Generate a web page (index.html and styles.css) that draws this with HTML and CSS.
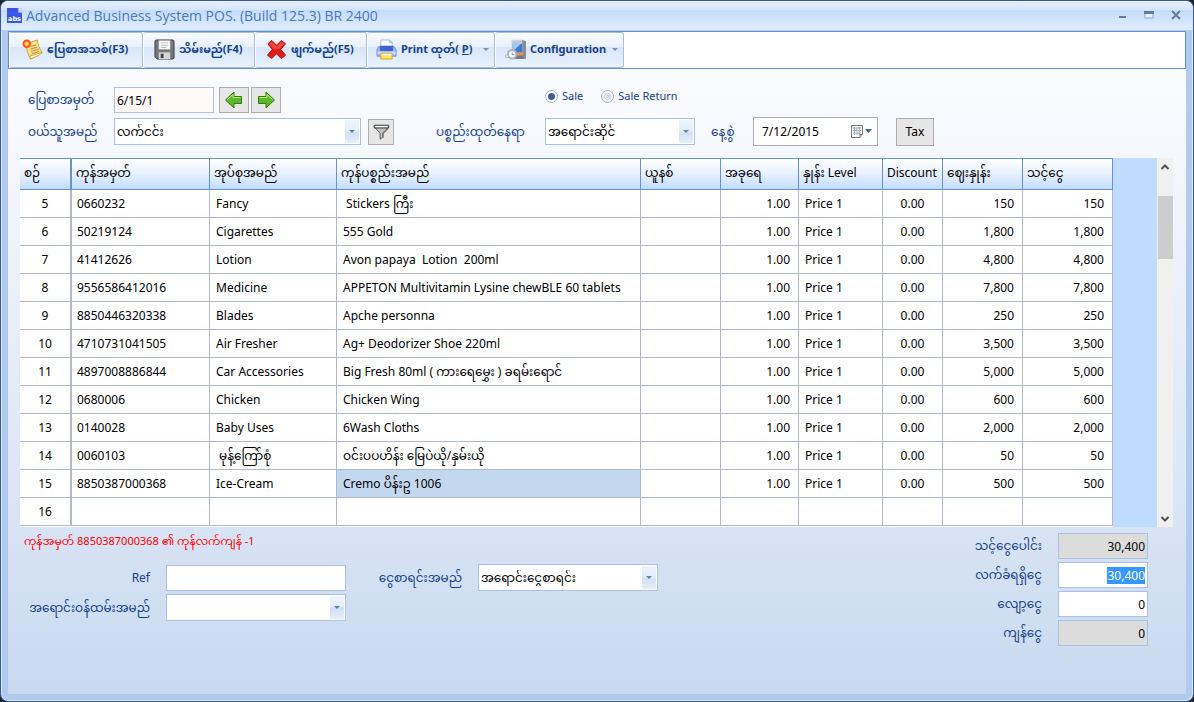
FILE: index.html
```html
<!DOCTYPE html>
<html lang="my">
<head>
<meta charset="utf-8">
<meta name="viewport" content="width=device-width, initial-scale=1">
<title>Advanced Business System POS</title>
<link rel="stylesheet" href="styles.css">
</head>
<body>
<div class="window">
  <header class="titlebar">
    <svg class="app-icon" viewBox="0 0 16 16" aria-hidden="true"><defs><linearGradient id="app" x1="0" y1="0" x2="0" y2="1"><stop offset="0" stop-color="#3a4ee0"/><stop offset="1" stop-color="#4468f0"/></linearGradient></defs><rect width="16" height="16" fill="url(#app)"/><path d="M12 0h4v5H12z" fill="#c8d4f8"/><path d="M0 7h16v9H0z" fill="#3556e6"/><text x="8" y="14" text-anchor="middle" class="app-icon-text">abs</text></svg>
    <h1>Advanced Business System POS. (Build 125.3) BR 2400</h1>
    <div class="win-controls">
      <button type="button" aria-label="Minimize"><svg viewBox="0 0 10 10"><rect x="2" y="6" width="7" height="2" fill="#66799a"/></svg></button>
      <button type="button" aria-label="Maximize"><svg viewBox="0 0 10 10"><path d="M1 2h8v6H1z" fill="#e4effc" stroke="#8fa9d0"/><path d="M0 1h10v3H0z" fill="#66799a"/></svg></button>
      <button type="button" aria-label="Close"><svg viewBox="0 0 10 10"><path d="M1 1l8 8M9 1L1 9" stroke="#66799a" stroke-width="2"/></svg></button>
    </div>
  </header>

  <main class="client">
    <nav class="toolbar">
      <button type="button" class="tool w-new">
        <svg viewBox="0 0 22 22"><path d="M4 5l12-4c1 5 2 9 5 13-4 2-7 4-12 7-3-5-4-10-5-16z" fill="#f9df8e" stroke="#c9a23a"/><path d="M9 21l-1-3 13-4-3 3z" fill="#fff4c4" stroke="#c9a23a"/><path d="M9 8l6-2M9 10.500l7-2M9.500 13l8-2.500M10 15.500l8-2.500" stroke="#b08b2c"/><circle cx="5" cy="5" r="3.500" fill="#ffb24a" stroke="#f25a1c" stroke-width="2"/><circle cx="5" cy="5" r="1.500" fill="#ffe36a"/></svg>
        <span>ပြေစာအသစ်(F3)</span></button>
      <button type="button" class="tool w-save">
        <svg viewBox="0 0 22 22"><path d="M2 1h18l1 1v18l-1 1H3l-2-2V2z" fill="#77777a" stroke="#3f3f42"/><path d="M5 1.500h12V11H5z" fill="#fff" stroke="#999" stroke-width=".6"/><path d="M7 4h8M7 6.500h8M7 9h6" stroke="#bbb"/><path d="M5 14h12v7H5z" fill="#d6d6d8"/><path d="M7 15.500h3V20H7z" fill="#444"/></svg>
        <span>သိမ်းမည်(F4)</span></button>
      <button type="button" class="tool w-del">
        <svg viewBox="0 0 22 22"><path d="M2 5l4-3.500 5 5 5-5L20.500 5l-5 6 5 6-4.500 3.500-5-5-5 5L1.500 17l5-6z" fill="#e01b18" stroke="#b8120f"/><path d="M3.500 5L6 3l5 5 5-5 3 2-5 5.500H8z" fill="#ee4a42"/></svg>
        <span>ဖျက်မည်(F5)</span></button>
      <button type="button" class="tool w-print">
        <svg viewBox="0 0 22 22"><path d="M5 1h9l3 3v6H5z" fill="#fff" stroke="#9dbdf0"/><path d="M14 1v3h3z" fill="#cfe0fa" stroke="#9dbdf0"/><path d="M3 8h16l2 3v7H1v-7z" fill="#9db9f2" stroke="#7391dc"/><path d="M4 7h14v5l-2 1H6l-2-1z" fill="#3f66cc"/><path d="M1.500 13h19v3h-19z" fill="#c9dafa"/><path d="M5 15h12v6H5z" fill="#ffe24d" stroke="#c9a73a"/><path d="M6 15.500h10v1.500H6z" fill="#fff"/></svg>
        <span>Print ထုတ်( <u>P</u>)</span><i class="drop"></i></button>
      <button type="button" class="tool w-conf">
        <svg viewBox="0 0 22 22"><path d="M7 1h11l1 1v16H7z" fill="#c3cad6" stroke="#dfe4ec"/><path d="M8 5h10v10H8z" fill="#3e78d6"/><path d="M8 4h10L8 13z" fill="#a6c6f2"/><path d="M18 1l4 1v19l-4-2z" fill="#858c9a"/><path d="M10 14h9v3h-8z" fill="#f0953a"/><path d="M10 17h8l3 4H10z" fill="#70788a"/><circle cx="7.500" cy="16" r="4.500" fill="#dfe3ea" stroke="#a9b0bd" stroke-width="2"/><circle cx="7.500" cy="16" r="3" fill="#fff"/><path d="M7.500 14v2.500H10" fill="none" stroke="#7b8394"/><circle cx="2" cy="18" r="1.500" fill="#eef0f4" stroke="#a9b0bd"/></svg>
        <span>Configuration</span><i class="drop"></i></button>
    </nav>

    <form class="sale-form">
      <label for="slip">ပြေစာအမှတ်</label>
      <div class="slip-cell">
        <input id="slip" class="slip" type="text" value="6/15/1">
        <button type="button" class="box-btn arrow" aria-label="Previous"><svg viewBox="0 0 20 20"><path d="M1.500 10L10 2v4.500h7.500v7H10V18z" fill="#5cb82a" stroke="#2b7d10"/><path d="M3.500 9.500L9 4.500v3h7.500" fill="none" stroke="#b6ec7c"/></svg></button>
        <button type="button" class="box-btn arrow" aria-label="Next"><svg viewBox="0 0 20 20"><path d="M18.500 10L10 2v4.500H2.500v7H10V18z" fill="#5cb82a" stroke="#2b7d10"/><path d="M3.500 7.500H11v-3l5.500 5" fill="none" stroke="#b6ec7c"/></svg></button>
      </div>
      <div class="radios">
        <label><input type="radio" name="kind" checked>Sale</label>
        <label><input type="radio" name="kind">Sale Return</label>
      </div>

      <label for="buyer">ဝယ်သူအမည်</label>
      <span class="combo"><select id="buyer"><option>လက်ငင်း</option></select></span>
      <button type="button" class="box-btn filter" aria-label="Filter"><svg viewBox="0 0 20 20"><path d="M3 5l6 6v7l3-2v-5l6-6z" fill="#c4c4c4" stroke="#555"/><path d="M12 11l6-6v2l-5 5v4l-1 .5z" fill="#777"/><path d="M2.500 2.500h16v3h-16z" fill="#f4f4f4" stroke="#222"/></svg></button>
      <label for="place">ပစ္စည်းထုတ်နေရာ</label>
      <span class="combo"><select id="place"><option>အရောင်းဆိုင်</option></select></span>
      <label for="date" class="date-label">နေ့စွဲ</label>
      <div class="date"><input id="date" type="text" value="7/12/2015"><button type="button" aria-label="Open calendar"><svg viewBox="0 0 22 13"><path d="M.5.500h11v9l-2.500 3H.5z" fill="#fff" stroke="#777"/><path d="M2 3h8M2 5.500h8M2 8h8M3.500 2v8M6 2v8M8.500 2v8" stroke="#a9b2c4"/><path d="M9 12.500v-3h2.500" fill="#ccc" stroke="#777"/><path d="M14 4h7l-3.500 4z" fill="#44658f"/></svg></button></div>
      <button type="button" class="box-btn tax">Tax</button>
    </form>

    <section class="grid-area">
      <div class="table-wrap">
      <table>
        <colgroup><col class="c-no"><col class="c-code"><col class="c-group"><col><col class="c-unit"><col class="c-qty"><col class="c-level"><col class="c-disc"><col class="c-price"><col class="c-amt"></colgroup>
        <thead><tr><th>စဉ်</th><th>ကုန်အမှတ်</th><th>အုပ်စုအမည်</th><th>ကုန်ပစ္စည်းအမည်</th><th>ယူနစ်</th><th>အခုရေ</th><th>နှုန်း Level</th><th>Discount</th><th>ဈေးနှုန်း</th><th>သင့်ငွေ</th></tr></thead>
        <tbody>
          <tr><td>5</td><td>0660232</td><td>Fancy</td><td> Stickers ကြီး</td><td></td><td>1.00</td><td>Price 1</td><td>0.00</td><td>150</td><td>150</td></tr>
          <tr><td>6</td><td>50219124</td><td>Cigarettes</td><td>555 Gold</td><td></td><td>1.00</td><td>Price 1</td><td>0.00</td><td>1,800</td><td>1,800</td></tr>
          <tr><td>7</td><td>41412626</td><td>Lotion</td><td>Avon papaya  Lotion  200ml</td><td></td><td>1.00</td><td>Price 1</td><td>0.00</td><td>4,800</td><td>4,800</td></tr>
          <tr><td>8</td><td>9556586412016</td><td>Medicine</td><td>APPETON Multivitamin Lysine chewBLE 60 tablets</td><td></td><td>1.00</td><td>Price 1</td><td>0.00</td><td>7,800</td><td>7,800</td></tr>
          <tr><td>9</td><td>8850446320338</td><td>Blades</td><td>Apche personna</td><td></td><td>1.00</td><td>Price 1</td><td>0.00</td><td>250</td><td>250</td></tr>
          <tr><td>10</td><td>4710731041505</td><td>Air Fresher</td><td>Ag+ Deodorizer Shoe 220ml</td><td></td><td>1.00</td><td>Price 1</td><td>0.00</td><td>3,500</td><td>3,500</td></tr>
          <tr><td>11</td><td>4897008886844</td><td>Car Accessories</td><td>Big Fresh 80ml ( ကားရေမွှေး ) ခရမ်းရောင်</td><td></td><td>1.00</td><td>Price 1</td><td>0.00</td><td>5,000</td><td>5,000</td></tr>
          <tr><td>12</td><td>0680006</td><td>Chicken</td><td>Chicken Wing</td><td></td><td>1.00</td><td>Price 1</td><td>0.00</td><td>600</td><td>600</td></tr>
          <tr><td>13</td><td>0140028</td><td>Baby Uses</td><td>6Wash Cloths</td><td></td><td>1.00</td><td>Price 1</td><td>0.00</td><td>2,000</td><td>2,000</td></tr>
          <tr><td>14</td><td>0060103</td><td> မုန့်ကြော်စုံ</td><td>ဝင်းပပဟိန်း မြေပဲယို/နှမ်းယို</td><td></td><td>1.00</td><td>Price 1</td><td>0.00</td><td>50</td><td>50</td></tr>
          <tr><td>15</td><td>8850387000368</td><td>Ice-Cream</td><td class="selected">Cremo ပိန်းဥ 1006</td><td></td><td>1.00</td><td>Price 1</td><td>0.00</td><td>500</td><td>500</td></tr>
          <tr><td>16</td><td></td><td></td><td></td><td></td><td></td><td></td><td></td><td></td><td></td></tr>
        </tbody>
      </table>
      </div>
      <div class="scrollbar">
        <button type="button" aria-label="Scroll up"><svg viewBox="0 0 10 10"><path d="M1.500 7L5 3.500 8.500 7" fill="none" stroke="#505050" stroke-width="2"/></svg></button>
        <div class="track"><div class="thumb"></div></div>
        <button type="button" aria-label="Scroll down"><svg viewBox="0 0 10 10"><path d="M1.500 3L5 6.500 8.500 3" fill="none" stroke="#505050" stroke-width="2"/></svg></button>
      </div>
    </section>

    <form class="bottom">
      <div class="details">
        <p class="stock-note">ကုန်အမှတ် 8850387000368 ၏ ကုန်လက်ကျန် -1</p>
        <div class="detail-grid">
          <label for="ref">Ref</label><input id="ref" type="text">
          <label for="account">ငွေစာရင်းအမည်</label>
          <span class="combo"><select id="account"><option>အရောင်းငွေစာရင်း</option></select></span>
          <label for="staff">အရောင်းဝန်ထမ်းအမည်</label>
          <span class="combo"><select id="staff"><option></option></select></span>
        </div>
      </div>
      <div class="totals">
        <label for="total">သင့်ငွေပေါင်း</label><input id="total" type="text" value="30,400" readonly>
        <label for="received">လက်ခံရရှိငွေ</label><input id="received" type="text" value="30,400">
        <label for="less">လျော့ငွေ</label><input id="less" type="text" value="0">
        <label for="balance">ကျန်ငွေ</label><input id="balance" type="text" value="0" readonly>
      </div>
    </form>
  </main>
</div>
<script src="app.js"></script>
</body>
</html>
```
FILE: styles.css
```css
* { box-sizing: border-box; }

:root {
  --navy: #15428b;
  --line: #b0b8cc;
  --field: #a9c1e4;
  --ui: "Noto Sans", "Noto Sans Myanmar", "Padauk", sans-serif;
}

body {
  margin: 0;
  background: #20242c;
  color: #000;
  font-family: var(--ui);
  font-size: 12px;
  line-height: 16px;
}

button, input, select { font: inherit; color: inherit; margin: 0; }
button { cursor: pointer; }

.window {
  display: flex;
  flex-direction: column;
  min-height: 100vh;
  border: 1px solid #3b5a8c;
  border-radius: 8px;
  background: #b1caf0;
  box-shadow: inset 1px 1px 0 #d9e8fc, inset -1px -1px 0 #d9e8fc;
}

/* Title bar */
.titlebar {
  display: flex;
  align-items: center;
  height: 30px;
  padding: 0 8px 0 6px;
  border-radius: 7px 7px 0 0;
  border-bottom: 1px solid #b0cff7;
  background: linear-gradient(#e6effc 0, #d5e5fb 9px, #c4dbf9 9px, #e0edfd 100%);
}
.app-icon { width: 15px; height: 15px; }
.app-icon-text { font: bold 7px "DejaVu Sans"; fill: #fff; }
.titlebar h1 {
  flex: 1;
  margin: 0 0 0 4px;
  color: #4a78bf;
  font: 14px/20px "Open Sans", "Noto Sans", sans-serif;
}
.win-controls { display: flex; gap: 9px; padding-bottom: 2px; }
.win-controls button { width: 18px; height: 18px; padding: 0; border: 0; background: none; }
.win-controls svg { display: block; width: 10px; height: 10px; margin: auto; }

/* Client area */
.client {
  flex: 1;
  display: flex;
  flex-direction: column;
  margin: 0 7px 7px;
  background: linear-gradient(#fcfdff 0, #f4f7fc 20%, #dbe5f5 70%, #c8d9ef 100%);
}

.toolbar {
  display: flex;
  height: 38px;
  border: 1px solid #6390d0;
  background: #fff;
}
.tool {
  display: flex;
  align-items: center;
  gap: 4px;
  padding: 0 0 2px 12px;
  border: 1px solid #a9c0d8;
  border-left-color: #fff;
  border-radius: 3px;
  background: linear-gradient(#fafcff 0, #e8f0fb 40%, #d8e6f8 42%, #e9f2fd 100%);
  color: var(--navy);
  font-size: 11px;
  font-weight: bold;
  white-space: nowrap;
}
.tool svg { flex: none; width: 21px; height: 21px; }
.w-new { width: 134px; }
.w-save, .w-del { width: 112px; padding-left: 10px; }
.w-print { width: 128px; padding-left: 8px; }
.w-conf { width: 129px; padding-left: 9px; }
.drop {
  margin: 0 5px 0 auto;
  border: 3px solid transparent;
  border-top-color: #6d97b8;
  border-bottom: 0;
}

/* Sale form */
.sale-form {
  display: grid;
  grid-template-columns: 86px 247px 75px 109px 150px 58px 125px auto;
  grid-template-rows: 26px 27px;
  row-gap: 5px;
  align-items: center;
  justify-content: start;
  padding: 18px 20px 13px;
}
label { color: var(--navy); white-space: nowrap; }
input[type="text"], select {
  width: 100%;
  height: 26px;
  padding: 0 2px;
  border: 1px solid var(--field);
  border-radius: 0;
  outline: 0;
  background: #fff;
}
select { appearance: none; height: 27px; }
.combo { position: relative; display: block; }
.combo::before {
  content: "";
  position: absolute;
  top: 2px;
  right: 2px;
  bottom: 2px;
  width: 14px;
  background: linear-gradient(#eef4fc 0, #e2ecf8 50%, #cfdff4 50%, #e6effa 100%);
  pointer-events: none;
}
.combo::after {
  content: "";
  position: absolute;
  top: 12px;
  right: 6px;
  border: 3px solid transparent;
  border-top-color: #5b87ab;
  border-bottom: 0;
  pointer-events: none;
}
.slip-cell { display: flex; gap: 2px; }
input.slip { width: 100px; margin-right: 3px; background: #fff9f9; }
.box-btn {
  display: flex;
  align-items: center;
  justify-content: center;
  height: 26px;
  padding: 0;
  border: 1px solid #acacac;
  background: #e6e6e6;
}
.arrow { width: 30px; }
.arrow svg { width: 20px; height: 20px; }
.filter { width: 26px; margin-left: 7px; }
.filter svg { width: 18px; height: 18px; }
.radios {
  grid-column: 5 / -1;
  display: flex;
  gap: 18px;
  padding-bottom: 8px;
  font-size: 11px;
}
.radios label { display: flex; align-items: center; gap: 4px; }
.radios input {
  appearance: none;
  width: 13px;
  height: 13px;
  border: 1px solid #a3b3cc;
  border-radius: 50%;
  background: radial-gradient(#d8dde6 0 3px, #fff 5px);
}
.radios input:checked { background: radial-gradient(#3e5f92 0 3px, #fff 4px); }
.date-label { padding-left: 16px; }
.date { display: flex; height: 29px; border: 1px solid #abadb3; background: #fff; }
.date input[type="text"] { flex: 1; min-width: 0; height: 27px; padding-left: 8px; border: 0; }
.date button { width: 34px; padding: 0 4px 0 8px; border: 0; background: none; }
.date svg { display: block; width: 22px; height: 13px; }
.tax { width: 38px; height: 28px; margin-left: 18px; }

/* Item grid */
.grid-area { display: flex; margin: 0 13px 0 12px; }
.table-wrap {
  flex: 1;
  height: 369px;
  padding-right: 44px;
  overflow: hidden;
  background: linear-gradient(#fff, #fff) content-box, #bfdbff;
}
table {
  width: 100%;
  border-collapse: separate;
  border-spacing: 0;
  table-layout: fixed;
}
.c-no { width: 52px; }
.c-code { width: 138px; }
.c-group { width: 127px; }
.c-unit { width: 80px; }
.c-qty { width: 78px; }
.c-level { width: 84px; }
.c-disc { width: 60px; }
.c-price { width: 80px; }
.c-amt { width: 90px; }
th {
  height: 32px;
  padding: 0 0 2px 4px;
  border: 1px solid #6593cf;
  border-left: 0;
  background: linear-gradient(#fff 0, #e9f2ff 45%, #c4dcff 100%);
  font-weight: normal;
  text-align: left;
  white-space: nowrap;
}
td {
  height: 28px;
  padding: 0 7px 0 6px;
  border-right: 1px solid var(--line);
  border-bottom: 1px solid var(--line);
  background: #fff;
  white-space: pre;
}
th:first-child, td:first-child { border-right-width: 2px; }
td:nth-child(2) { padding-left: 5px; }
td:first-child, td:nth-child(8) { padding: 0; text-align: center; }
td:nth-child(6), td:nth-child(9), td:nth-child(10) { text-align: right; padding-right: 8px; }
td.selected { background: #c3d8ef; }

.scrollbar { display: flex; flex-direction: column; width: 16px; background: #f0f0f0; }
.scrollbar button { height: 17px; padding: 0; border: 0; background: none; }
.scrollbar svg { display: block; width: 10px; height: 10px; margin: auto; }
.track { flex: 1; padding: 21px 0 0 1px; }
.thumb { height: 63px; background: #cdcdcd; }

/* Bottom form */
.bottom { display: flex; justify-content: space-between; padding: 6px 38px 16px 16px; }
.stock-note { margin: 0 0 15px; color: #f00; font-size: 11px; }
.detail-grid {
  display: grid;
  grid-template-columns: 126px 180px 100px 180px;
  column-gap: 16px;
  row-gap: 3px;
  align-items: center;
}
.detail-grid label { text-align: right; }
.totals {
  display: grid;
  grid-template-columns: auto 90px;
  column-gap: 16px;
  row-gap: 3px;
  align-items: center;
  align-content: start;
}
.totals label { text-align: right; }
.totals input[type="text"] { text-align: right; }
.totals input[readonly] { background: #dcdcdc; }
.totals input::selection { background: #3399ff; color: #fff; }
```
FILE: app.js
```js
const received = document.getElementById("received");
received.focus();
received.select();
```
